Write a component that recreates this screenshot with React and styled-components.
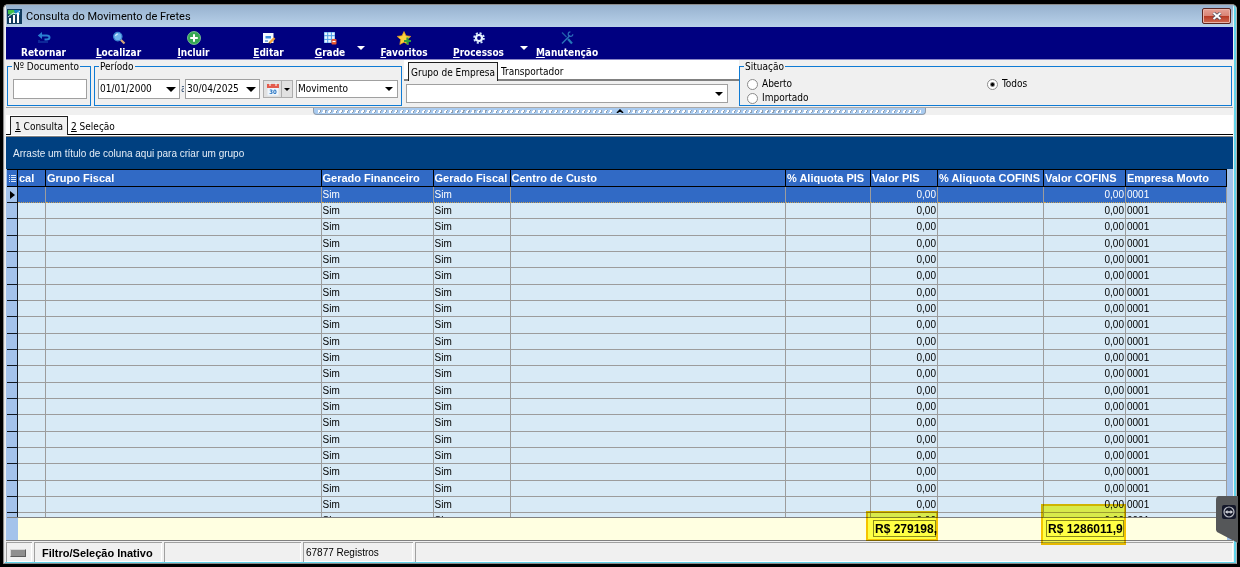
import React from 'react';
import styled, { createGlobalStyle, css } from 'styled-components';

const tahoma = '"DejaVu Sans Condensed", "DejaVu Sans", sans-serif';
const sans = '"Liberation Sans", Arial, sans-serif';

const GlobalStyle = createGlobalStyle`
  *, *::before, *::after {
    box-sizing: border-box;
  }

  body {
    margin: 0;
    background: #000;
    color: #000;
    font-family: ${tahoma};
    font-size: 10px;
    line-height: 12px;
  }

  button, input, select {
    font: inherit;
    color: inherit;
    margin: 0;
    padding: 0;
  }
`;

const Desktop = styled.div`
  height: 100vh;
  min-width: 1100px;
  padding: 4px 3px 3px;
  background: #000;
`;

const Window = styled.div`
  display: flex;
  flex-direction: column;
  height: 100%;
  border: 1px solid #8c8c8c;
  border-right-color: #b4b4b4;
  border-radius: 5px 5px 0 0;
  box-shadow: inset 1px 0 0 #e4e4e4, inset -2px -1px 0 #5fd3ea;
  padding: 0 3px 1px 2px;
  background: #f0f0f0;
`;

const TitleBar = styled.header`
  display: flex;
  align-items: center;
  gap: 4px;
  flex: none;
  height: 22px;
  padding: 0 2px 0 1px;
  background: linear-gradient(#97b2cf, #b9d1ea);
`;

const Title = styled.h1`
  flex: 1;
  margin: 0;
  padding-top: 1px;
  font-family: Roboto, sans-serif;
  font-size: 11px;
  line-height: 16px;
  font-weight: 400;
`;

const CloseButton = styled.button`
  display: flex;
  align-items: center;
  justify-content: center;
  width: 29px;
  height: 16px;
  border: 1px solid #5c2520;
  border-radius: 2px;
  box-shadow: inset 0 0 0 1px #e9b3a8;
  background: linear-gradient(#e6a195 0%, #d98476 48%, #b83a25 52%, #cf6b54 100%);
`;

const Toolbar = styled.nav`
  display: flex;
  flex: none;
  height: 33px;
  border-bottom: 1px solid #8a86c6;
  background: #000080;
`;

const ToolButton = styled.button`
  display: flex;
  flex-direction: column;
  align-items: center;
  justify-content: flex-end;
  gap: 1px;
  width: ${({ $width }) => $width || 75}px;
  border: 0;
  background: none;
  color: #fff;
  font-weight: 700;
  font-size: 10px;
  line-height: 13px;
`;

const ToolArrow = styled.button`
  display: flex;
  align-items: center;
  justify-content: center;
  width: ${({ $width }) => $width}px;
  padding-bottom: 10px;
  padding-top: 20px;
  border: 0;
  background: none;
  color: #fff;
`;

const Filters = styled.form`
  display: flex;
  flex: none;
  height: 48px;
  border-bottom: 1px solid #a8a8a8;
`;

const Group = styled.fieldset`
  position: relative;
  min-width: 0;
  height: 40px;
  margin: 6px 2px 0 1px;
  padding: 12px 3px 0 ${({ $lead }) => $lead || 3}px;
  border: 1px solid #0f7bd4;
  ${({ $grow }) => $grow && css`
    flex: 1;
    margin: 6px 1px 0 0;
    padding: 10px 4px 0 7px;
  `}
`;

/* the caption sits on the frame line */
const Legend = styled.legend`
  position: absolute;
  top: -6px;
  left: 4px;
  padding: 0 1px;
  background: #f0f0f0;
  white-space: nowrap;
`;

const Fields = styled.div`
  display: flex;
  align-items: center;
  height: 20px;
  gap: 3px;
`;

const TextInput = styled.input`
  width: 74px;
  height: 20px;
  border: 1px solid #a0a0a0;
  background: #fff;
`;

const DateBox = styled.div`
  display: flex;
  width: ${({ $width }) => $width}px;
  height: 20px;
  border: 1px solid #a0a0a0;
  background: #fff;

  input {
    flex: 1;
    min-width: 0;
    border: 0;
    padding-left: 1px;
    background: none;
  }

  button {
    width: 17px;
    border: 0;
    background: none;
  }
`;

const Until = styled.label`
  width: 3px;
  margin: 0 -2px;
  overflow: hidden;
  color: #26466d;
`;

const CalendarButtons = styled.div`
  display: flex;
  height: 18px;
  border: 1px solid #adadad;
  background: #e1e1e1;

  button {
    display: flex;
    align-items: center;
    justify-content: center;
    width: 17px;
    border: 0;
    background: none;
  }

  button + button {
    width: 11px;
    border-left: 1px solid #adadad;
  }
`;

const SelectBox = styled.div`
  display: grid;
  align-items: center;
  width: ${({ $width }) => ($width ? `${$width}px` : 'auto')};
  height: ${({ $height }) => $height || 18}px;
  border: 1px solid #a0a0a0;
  background: #fff;

  select {
    grid-area: 1 / 1;
    width: 100%;
    height: 100%;
    padding-left: 1px;
    border: 0;
    appearance: none;
    background: none;
  }

  svg {
    grid-area: 1 / 1;
    justify-self: end;
    margin-right: 4px;
    pointer-events: none;
  }
`;

const CompanyPanel = styled.div`
  width: 335px;
`;

const TabStrip = styled.div`
  display: flex;
  align-items: flex-end;
  height: ${({ $main }) => ($main ? 19 : 21)}px;
  padding-left: 4px;
  border-bottom: ${({ $main }) => ($main ? '1px solid #000' : '2px solid #808080')};
  background: #fff;
`;

const Tab = styled.button`
  height: 17px;
  padding: 2px 3px 0;
  border: 0;
  background: none;
  white-space: nowrap;
  ${({ $active, $main }) => $active && css`
    margin-bottom: ${$main ? -1 : -2}px;
    height: 19px;
    padding: 1px ${$main ? 4 : 2}px 0;
    border: 1px solid #202020;
    border-bottom: 0;
    background: #f0f0f0;
  `}
`;

const CompanySelect = styled.div`
  padding: 3px 11px 0 2px;
`;

const RadioGrid = styled.div`
  display: grid;
  grid-template-columns: 1fr 1fr;
`;

const RadioLabel = styled.label`
  display: flex;
  align-items: center;
  gap: 4px;
  height: 14px;

  input {
    appearance: none;
    width: 11px;
    height: 11px;
    border: 1px solid #8c8c8c;
    border-radius: 50%;
    background: #fff;
  }

  input:checked {
    background: radial-gradient(circle, #000 0 1px, #fff 3px);
  }
`;

const Splitter = styled.div`
  display: flex;
  justify-content: center;
  flex: none;
  height: 7px;
`;

const Grip = styled.button`
  display: flex;
  align-items: center;
  width: 50%;
  border: 1px solid #8f9dad;
  border-top: 0;
  border-radius: 0 0 4px 4px;
  background: #a9cbf0;
`;

const Dots = styled.span`
  flex: 1;
  height: 3px;
  margin: 0 4px;
  background: repeating-linear-gradient(115deg, #fff 0 2px, #8f9dad 2px 3px, #a9cbf0 3px 5px);
`;

const GroupPanel = styled.div`
  flex: none;
  height: 33px;
  margin-top: 1px;
  padding: 11px 7px 0;
  border-top: 1px solid #808080;
  background: #004080;
  color: #e4edf6;
  font-family: ${sans};
  font-size: 10px;
`;

const TabsBackdrop = styled.div`
  flex: none;
  padding: 1px 0 0;
  background: #fff;
`;

const GridArea = styled.main`
  display: flex;
  flex-direction: column;
  flex: 1;
  min-height: 0;
  padding-left: 1px;
  padding-right: 6px;
  border-bottom: 1px solid #808080;
  background: #a4c3eb;
  font-family: ${sans};
  font-size: 10px;
`;

const Rows = styled.div`
  flex: 1;
  min-height: 0;
  overflow: hidden;
`;

const Table = styled.table`
  width: 100%;
  table-layout: fixed;
  border-collapse: separate;
  border-spacing: 0;
`;

const HeadCell = styled.th`
  height: 18px;
  padding: 0 1px;
  border: solid #000;
  border-width: 1px 1px 1px 0;
  background: #316ac5;
  color: #fff;
  font-size: 11px;
  line-height: 13px;
  text-align: left;
  white-space: nowrap;

  svg {
    display: block;
    margin-left: 1px;
  }
`;

const Cell = styled.td`
  padding: 0 1px;
  border: solid #9c9c9c;
  border-width: 0 1px 1px 0;
  background: #d8eaf6;
  text-align: ${({ $right }) => ($right ? 'right' : 'left')};
  line-height: 12px;
`;

const Marker = styled.td`
  padding: 0;
  border: solid #101820;
  border-width: 0 1px 1px 0;
  background: #a4c3eb;

  svg {
    display: block;
    margin-left: 3px;
  }
`;

/* rows run 16, 16, 17 high */
const Row = styled.tr`
  height: 16px;

  &:nth-child(3n) {
    height: 17px;
  }

  ${({ $selected }) => $selected && css`
    ${Cell} {
      background: #316ac5;
      color: #fff;
      border-bottom: 1px dotted #c9a04e;
    }
  `}
`;

const TotalsCell = styled.td`
  height: 23px;
  padding: 2px 2px 3px;
  border-top: 1px solid #808080;
  background: ${({ $marker }) => ($marker ? '#a4c3eb' : '#ffffe1')};
`;

const Total = styled.div`
  position: relative;
  height: 17px;
  padding: 1px 1px;
  border: 1px solid #8c8c5a;
  font-size: 12px;
  font-weight: 700;
  line-height: 14px;
  white-space: nowrap;

  &::after {
    content: '';
    position: absolute;
    inset: ${({ $inset }) => $inset};
    border: 2px solid #f5c400;
    background: #ffff4d;
    mix-blend-mode: multiply;
  }
`;

const StatusBar = styled.footer`
  display: flex;
  flex: none;
  gap: 2px;
  height: 21px;
  padding-top: 1px;
  font-family: ${sans};
`;

const StatusPanel = styled.div`
  display: flex;
  align-items: center;
  width: ${({ $width }) => ($width ? `${$width}px` : 'auto')};
  flex: ${({ $width }) => ($width ? 'none' : 1)};
  padding-left: ${({ $pad }) => $pad || 2}px;
  border: solid #a0a0a0;
  border-width: 1px 0 0 1px;
  box-shadow: inset -1px -1px 0 #fff;
  font-size: ${({ $bold }) => ($bold ? 11 : 10)}px;
  font-weight: ${({ $bold }) => ($bold ? 700 : 400)};
`;

const Led = styled.span`
  width: 16px;
  height: 8px;
  border: 1px solid #6d6d6d;
  border-color: #d8d8d8 #5c5c5c #5c5c5c #d8d8d8;
  background: #8f8f8f;
`;

const SideTag = styled.button`
  position: fixed;
  right: 2px;
  top: 496px;
  border: 0;
  background: none;

  svg {
    display: block;
  }
`;

const Arrow = ({ size = 8 }) => (
  <svg width={size} height={size / 2} viewBox="0 0 8 4">
    <path d="M0 0h8L4 4z" fill="currentColor" />
  </svg>
);

const icons = {
  back: (
    <>
      <path d="M3 4.500h6.500q3 0 3 2t-3 2H7.500" fill="none" stroke="#2a7fd0" strokeWidth="2" />
      <path d="M5 1L.8 4.500 5 8z" fill="#2a7fd0" />
      <path d="M2 9v3M4 10v2M6 10v2M8 10v2M10 10v2" stroke="#1b4fb0" strokeWidth="1" />
    </>
  ),
  search: (
    <>
      <path d="M8.500 8.500l4 4" stroke="#d8a878" strokeWidth="2.200" />
      <circle cx="5.800" cy="5.600" r="4.200" fill="#6fb4ee" stroke="#3c86d2" strokeWidth="1.200" />
      <path d="M3.500 5q.6-2 2.500-2" fill="none" stroke="#d6ecff" strokeWidth="1.200" />
    </>
  ),
  add: (
    <>
      <circle cx="7" cy="7" r="6.500" fill="#35a853" stroke="#8ed09e" strokeWidth=".8" />
      <path d="M7 3.200v7.600M3.200 7h7.600" stroke="#fff" strokeWidth="2" />
    </>
  ),
  edit: (
    <>
      <rect x="1" y="2" width="10.500" height="10" fill="#f4faff" />
      <path d="M3.500 5h5.500v2.500H3.500z" fill="#3c8ede" />
      <path d="M3 10h3" stroke="#3c7ed0" strokeWidth="1.200" />
      <path d="M7.500 12l5-5" stroke="#f2a33a" strokeWidth="2.400" />
      <path d="M6.400 13l.6-1.900 1.400 1.400z" fill="#333" />
    </>
  ),
  grid: (
    <>
      <rect x="1" y="1" width="11" height="11" fill="#4a9be6" />
      <g fill="#e8f5ff">
        {[1.5, 5.2, 8.9].map((x) => [1.5, 5.2, 8.9].map((y) => (
          <rect key={`${x}-${y}`} x={x} y={y} width="2.700" height="2.700" />
        )))}
      </g>
      <rect x="8.500" y="8" width="5" height="5.500" rx="1" fill="#e8532f" />
      <path d="M9.500 10.500h3" stroke="#fff" strokeWidth="1.200" />
    </>
  ),
  star: (
    <>
      <path d="M7 .5l2 4.300 4.800.6-3.500 3.200.9 4.900L7 11.200l-4.200 2.300.9-4.900L.2 5.400 5 4.800z" fill="#fbd23c" stroke="#e89a1a" strokeWidth=".7" />
      <path d="M10.500 6.500v7M7 10h7" stroke="#2f9e3c" strokeWidth="2.200" />
    </>
  ),
  gear: (
    <>
      <circle cx="7" cy="7" r="4.900" fill="none" stroke="#cfe6fb" strokeWidth="1.800" strokeDasharray="2.050 1.800" />
      <circle cx="7" cy="7" r="3" fill="none" stroke="#e8f4ff" strokeWidth="2.200" />
    </>
  ),
  tools: (
    <>
      <path d="M2 1.500L6.500 6" stroke="#1f5fa8" strokeWidth="1.200" />
      <path d="M8 8l4 4.500" stroke="#2478b8" strokeWidth="2.200" />
      <path d="M2 12.500L10 4.500" stroke="#2a74b8" strokeWidth="1.500" />
      <path d="M12.800 3.200a2.300 2.300 0 1 1-2.400-2.400" fill="none" stroke="#2a6cb8" strokeWidth="1.200" />
    </>
  ),
};

const ToolIcon = ({ name }) => (
  <svg width="14" height="14" viewBox="0 0 14 14">{icons[name]}</svg>
);

const tools = [
  { icon: 'back', label: 'Retornar', plain: true },
  { icon: 'search', label: 'Localizar' },
  { icon: 'add', label: 'Incluir' },
  { icon: 'edit', label: 'Editar' },
  { icon: 'grid', label: 'Grade', width: 48, arrow: 13 },
  { icon: 'star', label: 'Favoritos', width: 74 },
  { icon: 'gear', label: 'Processos', arrow: 16 },
  { icon: 'tools', label: 'Manutenção', width: 70 },
];

const columns = [
  { title: 'cal', width: 28 },
  { title: 'Grupo Fiscal' },
  { title: 'Gerado Financeiro', width: 112, value: 'Sim' },
  { title: 'Gerado Fiscal', width: 77, value: 'Sim' },
  { title: 'Centro de Custo' },
  { title: '% Aliquota PIS', width: 85 },
  { title: 'Valor PIS', width: 67, value: '0,00', right: true, total: 'R$ 279198,', inset: '-10px -3px -5px -8px' },
  { title: '% Aliquota COFINS', width: 106 },
  { title: 'Valor COFINS', width: 82, value: '0,00', right: true, total: 'R$ 1286011,9', inset: '-17px -3px -9px -6px' },
  { title: 'Empresa Movto', width: 101, value: '0001' },
];

const Columns = () => (
  <colgroup>
    <col width="11" />
    {columns.map((c) => <col key={c.title} width={c.width} />)}
  </colgroup>
);

const rows = Array.from({ length: 21 }, (_, i) => i);

function App() {
  return (
    <>
      <GlobalStyle />
      <Desktop>
        <Window>
          <TitleBar>
            <svg width="15" height="15" viewBox="0 0 15 15">
              <rect width="15" height="15" fill="#123c5e" />
              <path d="M1 1h6l2 3-4 2-4-1z" fill="#3fc04a" />
              <path d="M7 1h6v5l-5-1z" fill="#1687c8" />
              <path d="M2 14V9h2v5M6 14V6h2v8M10 14V4h2v10" fill="#fff" />
              <path d="M1 8l5-4 3 1 4-3" fill="none" stroke="#cfe8f4" />
            </svg>
            <Title>Consulta do Movimento de Fretes</Title>
            <CloseButton aria-label="Fechar">
              <svg width="10" height="8" viewBox="0 0 10 8">
                <path d="M1.500 1l7 6M8.500 1l-7 6" stroke="#4a4a5a" strokeWidth="3.400" />
                <path d="M1.500 1l7 6M8.500 1l-7 6" stroke="#fff" strokeWidth="2" />
              </svg>
            </CloseButton>
          </TitleBar>

          <Toolbar>
            {tools.map((t) => (
              <React.Fragment key={t.label}>
                <ToolButton $width={t.width}>
                  <ToolIcon name={t.icon} />
                  <span>{t.plain ? t.label : <><u>{t.label[0]}</u>{t.label.slice(1)}</>}</span>
                </ToolButton>
                {t.arrow && (
                  <ToolArrow $width={t.arrow} aria-label={`Opções de ${t.label}`}><Arrow /></ToolArrow>
                )}
              </React.Fragment>
            ))}
          </Toolbar>

          <Filters onSubmit={(e) => e.preventDefault()}>
            <Group $lead={5}>
              <Legend><label htmlFor="documento">Nº Documento</label></Legend>
              <Fields><TextInput id="documento" type="text" /></Fields>
            </Group>
            <Group>
              <Legend>Período</Legend>
              <Fields>
                <DateBox $width={82}>
                  <input type="text" aria-label="Data inicial" defaultValue="01/01/2000" />
                  <button type="button" aria-label="Abrir data inicial"><Arrow size={10} /></button>
                </DateBox>
                <Until htmlFor="data-final">a</Until>
                <DateBox $width={75}>
                  <input id="data-final" type="text" defaultValue="30/04/2025" />
                  <button type="button" aria-label="Abrir data final"><Arrow size={10} /></button>
                </DateBox>
                <CalendarButtons>
                  <button type="button" aria-label="Calendário">
                    <svg width="12" height="13" viewBox="0 0 12 13">
                      <rect x=".5" y="1.500" width="11" height="11" fill="#eef6fd" />
                      <path d="M0 1h12v4H0z" fill="#e35b4c" />
                      <path d="M3 0v3M9 0v3" stroke="#fff" />
                      <text x="6" y="11" fontSize="6" fontWeight="700" textAnchor="middle" fill="#1f6fc0">30</text>
                    </svg>
                  </button>
                  <button type="button" aria-label="Opções do calendário"><Arrow size={6} /></button>
                </CalendarButtons>
                <SelectBox $width={102}>
                  <select aria-label="Tipo de período"><option>Movimento</option></select>
                  <Arrow />
                </SelectBox>
              </Fields>
            </Group>
            <CompanyPanel>
              <TabStrip>
                <Tab type="button" $active>Grupo de Empresa</Tab>
                <Tab type="button">Transportador</Tab>
              </TabStrip>
              <CompanySelect>
                <SelectBox $height={19}>
                  <select aria-label="Grupo de Empresa"><option /></select>
                  <Arrow />
                </SelectBox>
              </CompanySelect>
            </CompanyPanel>
            <Group $grow>
              <Legend>Situação</Legend>
              <RadioGrid>
                <RadioLabel><input type="radio" name="situacao" />Aberto</RadioLabel>
                <RadioLabel><input type="radio" name="situacao" defaultChecked />Todos</RadioLabel>
                <RadioLabel><input type="radio" name="situacao" />Importado</RadioLabel>
              </RadioGrid>
            </Group>
          </Filters>

          <Splitter>
            <Grip aria-label="Recolher filtros">
              <Dots />
              <svg width="8" height="4" viewBox="0 0 8 4">
                <path d="M1 4l3-3 3 3" fill="none" stroke="#000" strokeWidth="1.500" />
              </svg>
              <Dots />
            </Grip>
          </Splitter>

          <TabsBackdrop>
            <TabStrip $main>
              <Tab $main $active><u>1</u> Consulta</Tab>
              <Tab $main><u>2</u> Seleção</Tab>
            </TabStrip>
            <GroupPanel>Arraste um título de coluna aqui para criar um grupo</GroupPanel>
          </TabsBackdrop>

          <GridArea>
            <Rows>
              <Table>
                <Columns />
                <thead>
                  <tr>
                    <HeadCell aria-label="Colunas">
                      <svg width="7" height="9" viewBox="0 0 7 9">
                        <path d="M0 1.500h1M0 3.500h1M0 5.500h1M0 7.500h1M2 1.500h5M2 3.500h5M2 5.500h5M2 7.500h5" stroke="#dce8fa" />
                      </svg>
                    </HeadCell>
                    {columns.map((c) => <HeadCell key={c.title}>{c.title}</HeadCell>)}
                  </tr>
                </thead>
                <tbody>
                  {rows.map((row) => (
                    <Row key={row} $selected={row === 0}>
                      <Marker>
                        {row === 0 && (
                          <svg width="5" height="8" viewBox="0 0 5 8"><path d="M0 0l5 4-5 4z" /></svg>
                        )}
                      </Marker>
                      {columns.map((c) => <Cell key={c.title} $right={c.right}>{c.value}</Cell>)}
                    </Row>
                  ))}
                </tbody>
              </Table>
            </Rows>
            <Table>
              <Columns />
              <tbody>
                <tr>
                  <TotalsCell $marker />
                  {columns.map((c) => (
                    <TotalsCell key={c.title}>
                      {c.total && <Total $inset={c.inset}>{c.total}</Total>}
                    </TotalsCell>
                  ))}
                </tr>
              </tbody>
            </Table>
          </GridArea>

          <StatusBar>
            <StatusPanel $width={26} $pad={3}><Led /></StatusPanel>
            <StatusPanel $width={128} $pad={7} $bold>Filtro/Seleção Inativo</StatusPanel>
            <StatusPanel $width={137} />
            <StatusPanel $width={110}>67877 Registros</StatusPanel>
            <StatusPanel />
          </StatusBar>
        </Window>

        <SideTag aria-label="Painel remoto">
          <svg width="22" height="48" viewBox="0 0 22 48">
            <path d="M3 0h19v47L1 36l-1-2V4q0-4 3-4z" fill="#555759" />
            <rect x="6" y="9" width="14" height="14" rx="2" fill="#14182a" />
            <circle cx="13" cy="16" r="5" fill="none" stroke="#b9bcc4" strokeWidth="1.200" />
            <path d="M9 16l2.500-2v1.300h3V14l2.500 2-2.500 2v-1.300h-3V18z" fill="#d4d6dc" />
          </svg>
        </SideTag>
      </Desktop>
    </>
  );
}

export default App;
